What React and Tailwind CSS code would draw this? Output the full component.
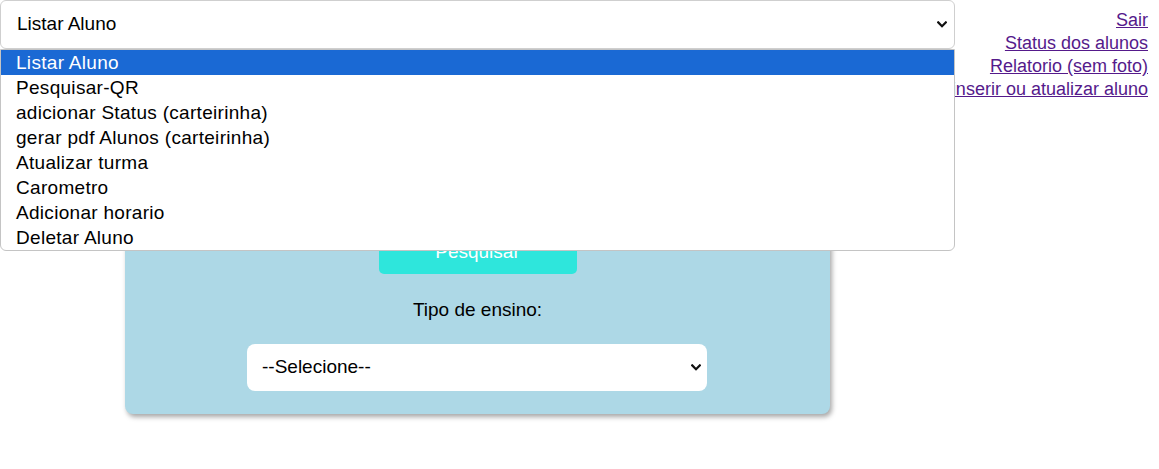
import React from "react";

const Chevron = ({ className = "" }) => (
  <svg className={className} width="10" height="7" viewBox="0 0 10 7" fill="none">
    <path d="M1.2 1.4 L5 5.2 L8.8 1.4" stroke="#111" strokeWidth="2.2" strokeLinecap="square" />
  </svg>
);

const options = [
  "Listar Aluno",
  "Pesquisar-QR",
  "adicionar Status (carteirinha)",
  "gerar pdf Alunos (carteirinha)",
  "Atualizar turma",
  "Carometro",
  "Adicionar horario",
  "Deletar Aluno",
];

export default function App() {
  return (
    <div className="relative w-[1159px] h-[469px] bg-white overflow-hidden font-['Liberation_Sans',Arial,sans-serif] text-black">
      {/* top bar */}
      <div className="flex justify-between">
        <div className="w-[955px] h-[49px] shrink-0 flex items-center justify-between pl-[16px] pr-[6px] border border-[#cfcfcf] rounded-[6px] bg-white text-[19px]">
          <span>Listar Aluno</span>
          <Chevron className="mr-[1px]" />
        </div>
        <div className="flex flex-col items-end pt-[9px] pr-[11px] text-[18px] leading-[23px] text-[#551a8b] whitespace-nowrap">
          <a href="#" className="underline">Sair</a>
          <a href="#" className="underline">Status dos alunos</a>
          <a href="#" className="underline">Relatorio (sem foto)</a>
          <a href="#" className="underline -ml-[40px]">inserir ou atualizar aluno</a>
        </div>
      </div>

      {/* card */}
      <div className="flex">
        <div className="ml-[125px] mt-[19px] w-[705px] bg-[#add8e6] rounded-[8px] shadow-[2px_3px_5px_rgba(0,0,0,0.35)] flex flex-col items-center pt-[30px] pb-[23px]">
          <div className="w-[460px] h-[40px] bg-white rounded-[8px]" />
          <div className="mt-[40px] w-[198px] h-[44px] bg-[#2ee6dc] rounded-[5px] flex items-center justify-center text-white text-[19px]">
            Pesquisar
          </div>
          <div className="mt-[24px] text-[19px] leading-[24px]">Tipo de ensino:</div>
          <div className="mt-[22px] ml-[-1px] w-[460px] h-[47px] bg-white rounded-[8px] flex items-center justify-between pl-[15px] pr-[6px] text-[19px]">
            <span>--Selecione--</span>
            <Chevron />
          </div>
        </div>
      </div>

      {/* open dropdown list */}
      <div className="absolute left-0 top-[49px] w-[955px] h-[202px] bg-white border border-[#c4c4c4] rounded-b-[6px] text-[19px] leading-[25px] tracking-[0.3px]">
        {options.map((o, i) => (
          <div
            key={o}
            className={
              i === 0
                ? "h-[25px] pl-[15px] bg-[#1a69d4] text-white"
                : "h-[25px] pl-[15px]"
            }
          >
            {o}
          </div>
        ))}
      </div>
    </div>
  );
}
